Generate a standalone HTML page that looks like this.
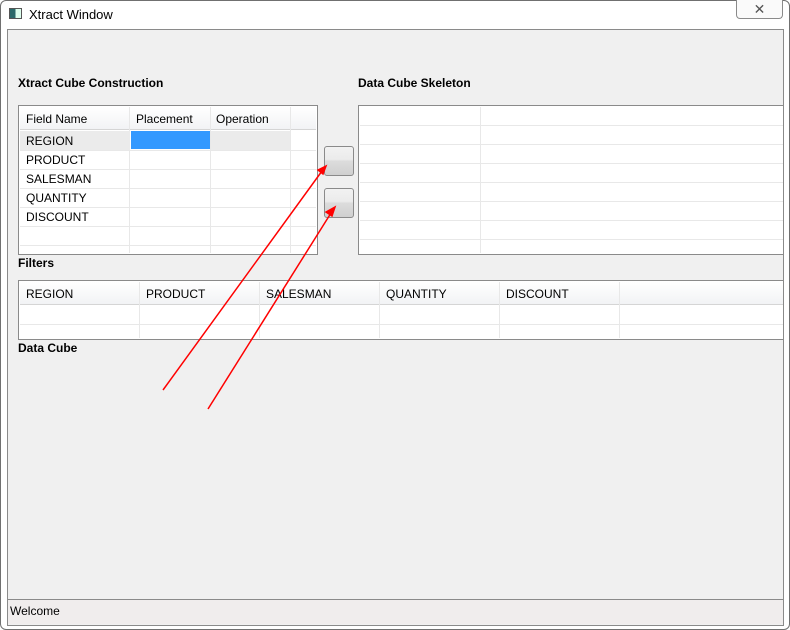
<!DOCTYPE html>
<html><head><style>
*{margin:0;padding:0;box-sizing:border-box}
body{width:790px;height:630px;overflow:hidden;background:#fff;font-family:"Liberation Sans",sans-serif;font-size:12px;color:#000;position:relative}
.a{position:absolute}
.hl{position:absolute;height:1px;background:#e8e8e8}
.vl{position:absolute;width:1px;background:#e8e8e8}
.t{position:absolute;font-size:12px;line-height:19px}
.b{position:absolute;font-weight:bold;font-size:12px}
.btn{position:absolute;width:30px;height:30px;border:1px solid #8a8a8a;border-radius:3px;background:linear-gradient(#f2f2f2 0,#ebebeb 45%,#dcdcdc 50%,#d0d0d0 100%)}
.hdr{position:absolute;background:linear-gradient(#fff,#f2f3f5);border-bottom:1px solid #d5d5d5}
</style></head><body>
<div class="a" style="left:0;top:0;width:790px;height:630px;border:1px solid #707070;border-radius:6px;background:#fff"></div>
<div class="a" style="left:9px;top:8px;width:13px;height:11px;border:1px solid #555;background:linear-gradient(90deg,#2a6a6a 50%,#dfe 50%)"></div>
<div class="a" style="left:29px;top:7px;font-size:13px">Xtract Window</div>
<div class="a" style="left:736px;top:0;width:47px;height:19px;border:1px solid #8a8a8a;border-top:none;border-radius:0 0 4px 4px;background:#fafafa;text-align:center;font-size:14px;color:#555;line-height:18px">✕</div>
<div class="a" style="left:7px;top:29px;width:777px;height:597px;border:1px solid #8a8a8a;background:#f0f0f0"></div>
<div class="a" style="left:8px;top:30px;width:775px;height:569px;overflow:hidden">
<div style="position:absolute;left:-8px;top:-30px;width:790px;height:630px">
<div class="b" style="left:18px;top:76px">Xtract Cube Construction</div>
<div class="b" style="left:358px;top:76px">Data Cube Skeleton</div>
<div class="a" style="left:18px;top:105px;width:300px;height:150px;border:1px solid #8a8a8a;background:#fff"></div>
<div class="hdr" style="left:20px;top:107px;width:296px;height:23px"></div>
<div class="vl" style="left:129px;top:107px;height:146px"></div>
<div class="vl" style="left:210px;top:107px;height:146px"></div>
<div class="vl" style="left:290px;top:107px;height:146px"></div>
<div class="t" style="left:26px;top:110px">Field Name</div>
<div class="t" style="left:136px;top:110px">Placement</div>
<div class="t" style="left:216px;top:110px">Operation</div>
<div class="a" style="left:20px;top:131px;width:110px;height:19px;background:#ebebeb"></div>
<div class="a" style="left:131px;top:131px;width:79px;height:18px;background:#3399ff"></div>
<div class="a" style="left:211px;top:131px;width:79px;height:19px;background:#ebebeb"></div>
<div class="hl" style="left:20px;top:150px;width:296px"></div>
<div class="hl" style="left:20px;top:169px;width:296px"></div>
<div class="hl" style="left:20px;top:188px;width:296px"></div>
<div class="hl" style="left:20px;top:207px;width:296px"></div>
<div class="hl" style="left:20px;top:226px;width:296px"></div>
<div class="hl" style="left:20px;top:245px;width:296px"></div>
<div class="t" style="left:26px;top:132px">REGION</div>
<div class="t" style="left:26px;top:151px">PRODUCT</div>
<div class="t" style="left:26px;top:170px">SALESMAN</div>
<div class="t" style="left:26px;top:189px">QUANTITY</div>
<div class="t" style="left:26px;top:208px">DISCOUNT</div>
<div class="btn" style="left:324px;top:146px"></div>
<div class="btn" style="left:324px;top:188px"></div>
<div class="a" style="left:358px;top:105px;width:440px;height:150px;border:1px solid #8a8a8a;background:#fff"></div>
<div class="vl" style="left:480px;top:107px;height:146px"></div>
<div class="hl" style="left:360px;top:125px;width:430px"></div>
<div class="hl" style="left:360px;top:144px;width:430px"></div>
<div class="hl" style="left:360px;top:163px;width:430px"></div>
<div class="hl" style="left:360px;top:182px;width:430px"></div>
<div class="hl" style="left:360px;top:201px;width:430px"></div>
<div class="hl" style="left:360px;top:220px;width:430px"></div>
<div class="hl" style="left:360px;top:239px;width:430px"></div>
<div class="b" style="left:18px;top:256px">Filters</div>
<div class="a" style="left:18px;top:280px;width:780px;height:60px;border:1px solid #8a8a8a;background:#fff"></div>
<div class="hdr" style="left:20px;top:282px;width:770px;height:23px"></div>
<div class="vl" style="left:139px;top:282px;height:56px"></div>
<div class="vl" style="left:259px;top:282px;height:56px"></div>
<div class="vl" style="left:379px;top:282px;height:56px"></div>
<div class="vl" style="left:499px;top:282px;height:56px"></div>
<div class="vl" style="left:619px;top:282px;height:56px"></div>
<div class="hl" style="left:20px;top:324px;width:770px"></div>
<div class="t" style="left:26px;top:285px">REGION</div>
<div class="t" style="left:146px;top:285px">PRODUCT</div>
<div class="t" style="left:266px;top:285px">SALESMAN</div>
<div class="t" style="left:386px;top:285px">QUANTITY</div>
<div class="t" style="left:506px;top:285px">DISCOUNT</div>
<div class="b" style="left:18px;top:341px">Data Cube</div>
</div></div>
<div class="a" style="left:8px;top:599px;width:775px;height:1px;background:#8a8a8a"></div>
<div class="a" style="left:8px;top:600px;width:775px;height:24px;background:#f0eded"></div>
<div class="t" style="left:10px;top:602px">Welcome</div>
<svg class="a" style="left:0;top:0" width="790" height="630">
<g stroke="#ff0000" stroke-width="1.5" fill="#ff0000">
<line x1="163" y1="390" x2="322" y2="171"/>
<polygon points="326,166 318,170 323,174"/>
<line x1="208" y1="409" x2="331" y2="213"/>
<polygon points="335,207 326,212 332,216"/>
</g>
</svg>
</body></html>
